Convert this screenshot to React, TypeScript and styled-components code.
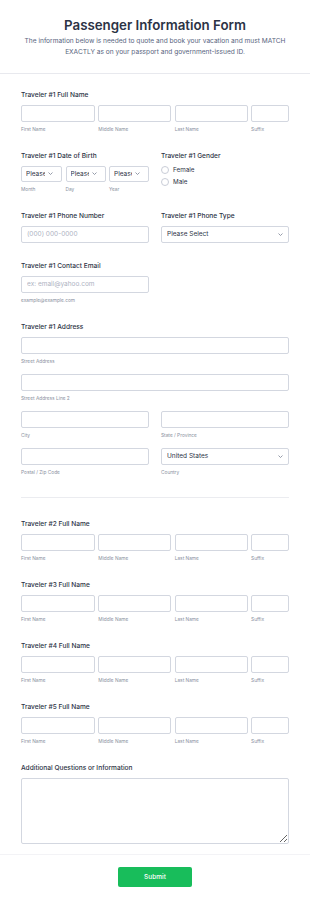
import React from 'react';
import styled, { createGlobalStyle } from 'styled-components';

const GlobalStyle = createGlobalStyle`
  html, body {
    margin: 0;
    padding: 0;
    background: #ffffff;
    font-family: Inter, "Noto Sans", "Liberation Sans", sans-serif;
    color: #2c3345;
  }
  * { box-sizing: border-box; }
`;

const Page = styled.div`
  width: 310px;
  background: #ffffff;
`;

const Header = styled.header`
  padding: 16px 10px 15px;
  text-align: center;
  border-bottom: 1px solid #e8e9ee;
`;

const Title = styled.h1`
  margin: 0;
  font-size: 13.3px;
  line-height: 18px;
  font-weight: 600;
  color: #2c3345;
`;

const Subtitle = styled.p`
  margin: 1.5px 0 0;
  font-size: 6.6px;
  line-height: 11px;
  color: #57647e;
`;

const Body = styled.div`
  padding: 16px 21px 0;
`;

const Question = styled.section<{ $last?: boolean }>`
  padding-bottom: ${p => (p.$last ? 10 : 18)}px;
`;

const Label = styled.div`
  font-size: 6.6px;
  line-height: 10px;
  font-weight: 450;
  color: #2c3345;
  margin-bottom: 5px;
`;

const NameRow = styled.div`
  display: grid;
  grid-template-columns: 74fr 73fr 73fr 38fr;
  column-gap: 3.5px;
`;

const Field = styled.div`
  display: flex;
  flex-direction: column;
  min-width: 0;
`;

const TextInput = styled.input`
  display: block;
  width: 100%;
  height: 17px;
  margin: 0;
  padding: 0 5px;
  border: 1px solid #d3d7e0;
  border-radius: 2px;
  background: #fff;
  font-family: inherit;
  font-size: 6.5px;
  color: #2c3345;
  outline: none;
  &::placeholder { color: #adb2bf; }
`;

const SubLabel = styled.span`
  margin-top: 3px;
  font-size: 4.8px;
  line-height: 8px;
  color: #8a91a0;
  white-space: nowrap;
`;

const TwoCol = styled.div`
  display: grid;
  grid-template-columns: 1fr 1fr;
  column-gap: 12px;
`;

const DobRow = styled.div`
  display: grid;
  grid-template-columns: 41fr 40fr 40fr;
  column-gap: 3.5px;
`;

const SelectBox = styled.div<{ $height?: number; $compact?: boolean }>`
  display: flex;
  align-items: center;
  gap: ${p => (p.$compact ? 3 : 2)}px;
  height: ${p => p.$height ?? 17}px;
  padding: ${p => (p.$compact ? '0 8px 0 4px' : '0 5px')};
  border: 1px solid #d3d7e0;
  border-radius: 2px;
  background: #fff;
  font-size: 6.5px;
  color: #2c3345;
`;

const SelectText = styled.span`
  flex: 1;
  min-width: 0;
  overflow: hidden;
  white-space: nowrap;
`;

const RadioList = styled.div`
  display: flex;
  flex-direction: column;
  gap: 4px;
`;

const RadioItem = styled.label`
  display: flex;
  align-items: center;
  gap: 4px;
  height: 8px;
  font-size: 6.3px;
  color: #2c3345;
`;

const RadioCircle = styled.span`
  width: 8px;
  height: 8px;
  border: 1px solid #c9cdd7;
  border-radius: 50%;
  background: #fff;
`;

const Stack = styled.div`
  display: flex;
  flex-direction: column;
  gap: 9px;
`;

const Divider = styled.hr`
  margin: 3px 0 21px;
  border: 0;
  border-top: 1px solid #ebecf0;
`;

const TextArea = styled.textarea`
  display: block;
  width: 100%;
  height: 66px;
  margin: 0;
  border: 1px solid #d3d7e0;
  border-radius: 2px;
  resize: vertical;
  font-family: inherit;
  font-size: 6.5px;
  outline: none;
`;

const Footer = styled.footer`
  display: flex;
  justify-content: center;
  padding: 12px 0 16px;
  border-top: 1px solid #f3f3f6;
  border-bottom: 1px solid #f3f3f6;
`;

const SubmitButton = styled.button`
  width: 74px;
  height: 20px;
  margin: 0;
  border: 0;
  border-radius: 2px;
  background: #18bd5b;
  color: #fff;
  font-family: inherit;
  font-size: 6.5px;
  font-weight: 500;
  cursor: pointer;
`;

const Chevron = () => (
  <svg width="5" height="3" viewBox="0 0 5 3" fill="none" style={{ flex: 'none' }}>
    <polyline points="0.5,0.5 2.5,2.5 4.5,0.5" stroke="#7b8394" strokeWidth="0.8" />
  </svg>
);

const Select = ({ text, height, compact }: { text: string; height?: number; compact?: boolean }) => (
  <SelectBox $height={height} $compact={compact}>
    <SelectText>{text}</SelectText>
    <Chevron />
  </SelectBox>
);

const FullName = ({ n }: { n: number }) => (
  <Question>
    <Label>Traveler #{n} Full Name</Label>
    <NameRow>
      {['First Name', 'Middle Name', 'Last Name', 'Suffix'].map(s => (
        <Field key={s}>
          <TextInput />
          <SubLabel>{s}</SubLabel>
        </Field>
      ))}
    </NameRow>
  </Question>
);

export default function App() {
  return (
    <Page>
      <GlobalStyle />
      <Header>
        <Title>Passenger Information Form</Title>
        <Subtitle>
          The information below is needed to quote and book your vacation and must MATCH
          <br />
          EXACTLY as on your passport and government-issued ID.
        </Subtitle>
      </Header>
      <Body>
        <FullName n={1} />

        <Question>
          <TwoCol>
            <div>
              <Label>Traveler #1 Date of Birth</Label>
              <DobRow>
                {['Month', 'Day', 'Year'].map(s => (
                  <Field key={s}>
                    <Select text="Please Select" height={16} compact />
                    <SubLabel>{s}</SubLabel>
                  </Field>
                ))}
              </DobRow>
            </div>
            <div>
              <Label>Traveler #1 Gender</Label>
              <RadioList>
                <RadioItem><RadioCircle />Female</RadioItem>
                <RadioItem><RadioCircle />Male</RadioItem>
              </RadioList>
            </div>
          </TwoCol>
        </Question>

        <Question>
          <TwoCol>
            <Field>
              <Label>Traveler #1 Phone Number</Label>
              <TextInput placeholder="(000) 000-0000" />
            </Field>
            <Field>
              <Label>Traveler #1 Phone Type</Label>
              <Select text="Please Select" />
            </Field>
          </TwoCol>
        </Question>

        <Question>
          <Label>Traveler #1 Contact Email</Label>
          <TwoCol>
            <Field>
              <TextInput placeholder="ex: email@yahoo.com" />
              <SubLabel>example@example.com</SubLabel>
            </Field>
          </TwoCol>
        </Question>

        <Question>
          <Label>Traveler #1 Address</Label>
          <Stack>
            <Field>
              <TextInput />
              <SubLabel>Street Address</SubLabel>
            </Field>
            <Field>
              <TextInput />
              <SubLabel>Street Address Line 2</SubLabel>
            </Field>
            <TwoCol>
              <Field>
                <TextInput />
                <SubLabel>City</SubLabel>
              </Field>
              <Field>
                <TextInput />
                <SubLabel>State / Province</SubLabel>
              </Field>
            </TwoCol>
            <TwoCol>
              <Field>
                <TextInput />
                <SubLabel>Postal / Zip Code</SubLabel>
              </Field>
              <Field>
                <Select text="United States" />
                <SubLabel>Country</SubLabel>
              </Field>
            </TwoCol>
          </Stack>
        </Question>

        <Divider />

        <FullName n={2} />
        <FullName n={3} />
        <FullName n={4} />
        <FullName n={5} />

        <Question $last>
          <Label>Additional Questions or Information</Label>
          <TextArea />
        </Question>
      </Body>
      <Footer>
        <SubmitButton>Submit</SubmitButton>
      </Footer>
    </Page>
  );
}
